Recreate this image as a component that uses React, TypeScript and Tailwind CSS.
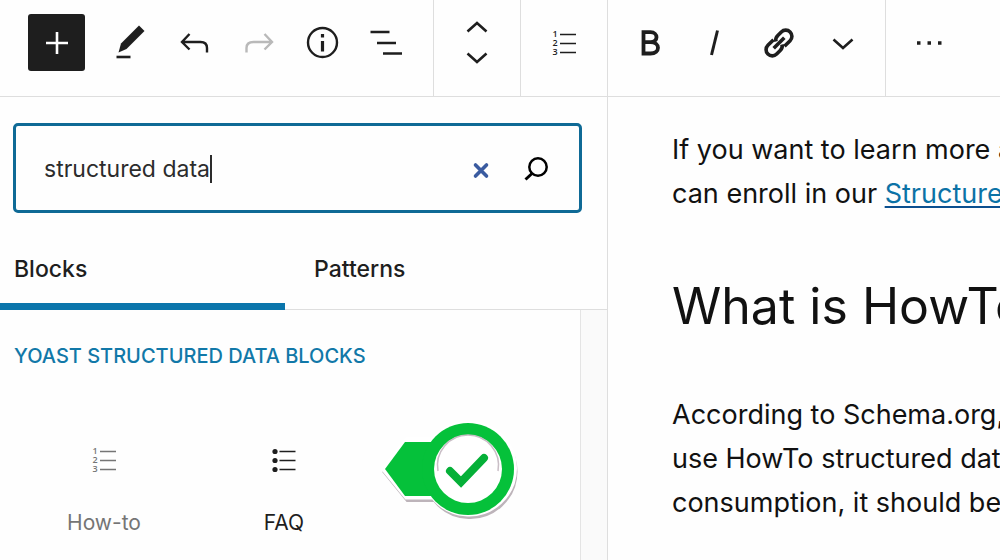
import { useState, type ReactNode } from "react";

const TABS = ["Blocks", "Patterns"];

function Icon({ children, className = "size-12" }: { children: ReactNode; className?: string }) {
  return (
    <svg viewBox="0 0 48 48" className={className} fill="none" stroke="currentColor" strokeWidth="3" aria-hidden="true">
      {children}
    </svg>
  );
}

function ToolButton({ label, disabled, children }: { label: string; disabled?: boolean; children: ReactNode }) {
  return (
    <button
      type="button"
      aria-label={label}
      disabled={disabled}
      className="flex h-16 w-16 items-center justify-center text-[#1e1e1e] disabled:text-[#b9b9b9]"
    >
      {children}
    </button>
  );
}

function ToolGroup({ className = "", children }: { className?: string; children: ReactNode }) {
  return (
    <div className={`flex shrink-0 items-center border-r border-[#dedede] pb-[11px] ${className}`}>{children}</div>
  );
}

const ChevronDown = () => (
  <Icon>
    <path d="M14.5 20.5l9.5 8.5 9.5-8.5" strokeWidth="2.6" />
  </Icon>
);

const NumberedList = () => (
  <Icon>
    <path d="M20 15.500h16M20 24.500h16M20 33.500h16" strokeWidth="1.600" />
    <g fill="currentColor" stroke="none" fontFamily="Open Sans, sans-serif" fontSize="9" fontWeight="600">
      <text x="12.500" y="18">1</text>
      <text x="12.500" y="27">2</text>
      <text x="12.500" y="36">3</text>
    </g>
  </Icon>
);

const BulletList = () => (
  <Icon>
    <path d="M19.500 15.500h16M19.500 24.500h16M19.500 33.500h16" strokeWidth="1.600" />
    <g fill="currentColor" stroke="none">
      <circle cx="15" cy="15.500" r="2.600" />
      <circle cx="15" cy="24.500" r="2.600" />
      <circle cx="15" cy="33.500" r="2.600" />
    </g>
  </Icon>
);

function Toolbar() {
  return (
    <header className="flex h-[97px] border-b border-[#dedede]">
      <ToolGroup className="pr-3.5 pl-7">
        <button
          type="button"
          aria-label="Add block"
          className="mr-3.5 flex size-[57px] items-center justify-center rounded-[3px] bg-[#1e1e1e] text-white"
        >
          <Icon>
            <path d="M24 13v22M13 24h22" strokeWidth="2.600" />
          </Icon>
        </button>
        <ToolButton label="Edit">
          <Icon>
            <path d="M11.500 33.500l2.500-9 18-18 5.500 5.500-18 18z" fill="currentColor" stroke="none" />
            <path d="M9.500 38h14" strokeWidth="2.600" />
          </Icon>
        </ToolButton>
        <ToolButton label="Undo">
          <Icon>
            <path d="M18.500 15l-7.500 8 7.500 7.500M11 23h18.500q6.500 0 6.500 6v4.500" strokeWidth="2.400" />
          </Icon>
        </ToolButton>
        <ToolButton label="Redo" disabled>
          <Icon>
            <path d="M29.500 15l7.500 8-7.500 7.500M37 23h-18.500q-7 0-7 6v4.500" strokeWidth="2.400" />
          </Icon>
        </ToolButton>
        <ToolButton label="Details">
          <Icon>
            <circle cx="23.500" cy="23.500" r="14.500" strokeWidth="2.400" />
            <path d="M23.500 22v10.500M23.500 15v3.500" strokeWidth="3.200" />
          </Icon>
        </ToolButton>
        <ToolButton label="Outline">
          <Icon>
            <path d="M7.500 13h19M14 24h19M20 34.500h19" strokeWidth="2.600" />
          </Icon>
        </ToolButton>
      </ToolGroup>

      <ToolGroup className="w-[87px] flex-col justify-center text-[#1e1e1e]">
        <button type="button" aria-label="Move up" className="flex h-8 w-12 items-center justify-center overflow-hidden">
          <Icon className="size-12 shrink-0">
            <path d="M14.500 28.500l9.500-8.500 9.500 8.500" strokeWidth="2.600" />
          </Icon>
        </button>
        <button type="button" aria-label="Move down" className="flex h-8 w-12 items-center justify-center overflow-hidden">
          <Icon className="size-12 shrink-0">
            <path d="M14.500 18.500l9.500 8.500 9.500-8.500" strokeWidth="2.600" />
          </Icon>
        </button>
      </ToolGroup>

      <ToolGroup className="w-[87px] justify-center">
        <ToolButton label="List type">
          <NumberedList />
        </ToolButton>
      </ToolGroup>

      <ToolGroup className="pr-2.5 pl-[11px]">
        <ToolButton label="Bold">
          <Icon>
            <path d="M17 13.200h6.500c8 0 8 10 0 10h-6.500M23.500 23.200c10 0 10 11.300 0 11.300h-6.500M16.500 11.300v25.100" strokeWidth="3.800" />
          </Icon>
        </ToolButton>
        <ToolButton label="Italic">
          <Icon>
            <path d="M26.500 11.500l-6 24.500" strokeWidth="3" />
          </Icon>
        </ToolButton>
        <ToolButton label="Link">
          <Icon>
            <g transform="rotate(-45 24 24)" strokeWidth="3.600">
              <path d="M22.500 17.800h-8a6.200 6.200 0 0 0 0 12.400h5q4 0 5.500-3" />
              <path d="M25.500 30.200h8a6.200 6.200 0 0 0 0-12.400h-5q-4 0-5.500 3" />
              <path d="M16.500 24h15" />
            </g>
          </Icon>
        </ToolButton>
        <ToolButton label="More rich text controls">
          <ChevronDown />
        </ToolButton>
      </ToolGroup>

      <div className="flex items-center pb-[11px] pl-3">
        <ToolButton label="Options">
          <Icon>
            <path d="M11 24h3.500M21.500 24h3.500M32 24h3.500" strokeWidth="3.500" />
          </Icon>
        </ToolButton>
      </div>
    </header>
  );
}

function SearchBox() {
  const [query, setQuery] = useState("structured data");

  return (
    <div className="mt-[26px] mr-[25px] ml-[13px] flex h-[90px] items-center rounded-[5px] border-3 border-[#0f6a96] pt-0.5 pr-5 pl-7">
      <input
        type="text"
        aria-label="Search for blocks and patterns"
        value={query}
        onChange={(e) => setQuery(e.target.value)}
        className="field-sizing-content text-[23px] leading-8 text-[#2c2c2c] outline-none"
      />
      <span className="h-7 w-0.5 bg-[#2c2c2c]" />
      <button type="button" aria-label="Clear search" onClick={() => setQuery("")} className="ml-auto flex w-12 justify-center text-[#3a5ba0]">
        <Icon>
          <path d="M20.500 20l11 11M31.500 20l-11 11" strokeWidth="3.600" strokeLinecap="round" />
        </Icon>
      </button>
      <button type="button" aria-label="Search" className="ml-2 flex w-12 justify-center text-black">
        <Icon>
          <circle cx="27" cy="22" r="8.700" strokeWidth="2.500" />
          <path d="M21 28.500l-6.500 6" strokeWidth="3" />
        </Icon>
      </button>
    </div>
  );
}

function CheckBadge() {
  return (
    <svg viewBox="0 0 144 112" className="ml-1 h-28 w-36" role="img" aria-label="Recommended">
      <path
        d="M7 51l22-28h27a44.500 44.500 0 1 1 0 55h-27z"
        transform="translate(1 3)"
        fill="#bdb4ba"
        stroke="#bdb4ba"
        strokeWidth="6"
      />
      <path d="M7 51l22-28h27a44.500 44.500 0 1 1 0 55h-27z" fill="#fff" stroke="#fff" strokeWidth="7" />
      <path d="M7 51l20-27h29v54h-29z" fill="#05c13a" />
      <circle cx="90" cy="51" r="46" fill="#05c13a" />
      <circle cx="90" cy="51" r="34" fill="#fff" />
      <path d="M60 53a30.500 30.500 0 1 1 60 0" fill="none" stroke="#c9bec6" strokeWidth="1.500" />
      <path d="M72 53l11 11 23-24" fill="none" stroke="#05b038" strokeWidth="8" strokeLinecap="round" />
    </svg>
  );
}

function Inserter() {
  const [tab, setTab] = useState("Blocks");

  return (
    <aside className="flex w-[608px] shrink-0 flex-col border-r border-[#dedede]">
      <SearchBox />

      <div role="tablist" className="mt-4 flex gap-[15px] border-b border-[#dedede]">
        {TABS.map((name) => (
          <button
            key={name}
            type="button"
            role="tab"
            aria-selected={tab === name}
            onClick={() => setTab(name)}
            className="-mb-px h-[81px] w-[285px] border-b-7 border-transparent pt-1.5 pl-3.5 text-left text-[23px] font-medium text-[#1e1e1e] aria-selected:border-[#0a75ab]"
          >
            {name}
          </button>
        ))}
      </div>

      <div className="flex grow">
        <div className="grow px-3.5 pt-8">
          <h2 className="text-[20px] leading-7 font-medium text-[#1178a8] uppercase">Yoast Structured Data Blocks</h2>
          <div className="mt-12 flex">
            <button type="button" className="flex w-[180px] flex-col items-center pt-[18px] text-[21px] leading-7 text-[#757575]">
              <NumberedList />
              <span className="mt-[25px]">How-to</span>
            </button>
            <button type="button" className="flex w-[180px] flex-col items-center pt-[18px] text-[21px] leading-7 text-[#1e1e1e]">
              <BulletList />
              <span className="mt-[25px]">FAQ</span>
            </button>
            <CheckBadge />
          </div>
        </div>
        <div className="w-[27px] border-l border-[#e4e4e4] bg-[#fafafa]" />
      </div>
    </aside>
  );
}

export default function App() {
  return (
    <div className="flex h-screen flex-col overflow-hidden bg-[#fefefe] font-['Inter',sans-serif]">
      <Toolbar />
      <div className="flex min-h-0 grow">
        <Inserter />
        <main className="min-w-0 grow overflow-hidden pt-[31px] pl-16 whitespace-nowrap text-[#111111]">
          <p className="text-[27px] leading-[44px]">
            If you want to learn more about
            <br />
            can enroll in our{" "}
            <a href="#structured-data" className="text-[#0b72a6] underline decoration-[#0b4f8f] decoration-2 underline-offset-3">
              Structured data
            </a>
          </p>
          <h1 className="mt-14 text-[50px] leading-[68px]">What is HowTo</h1>
          <p className="mt-[53px] text-[27px] leading-[44px]">
            According to Schema.org, you
            <br />
            use HowTo structured data
            <br />
            consumption, it should be
          </p>
        </main>
      </div>
    </div>
  );
}
